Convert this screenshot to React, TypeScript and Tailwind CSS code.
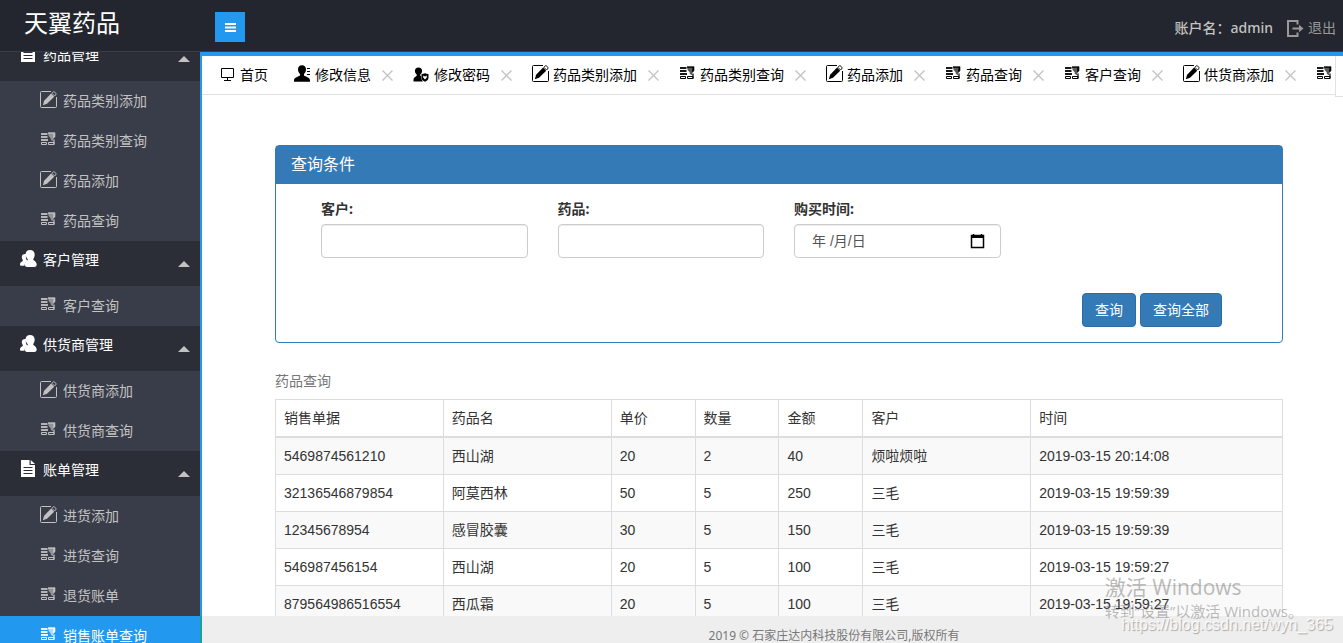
import type { ReactNode } from 'react';

type IconName = 'edit' | 'query' | 'users' | 'doc' | 'userInfo' | 'userShield' | 'monitor';

interface MenuGroup {
  title: string;
  icon: IconName;
  items: { label: string; icon: IconName; active?: boolean }[];
}

const menu: MenuGroup[] = [
  {
    title: '药品管理',
    icon: 'doc',
    items: [
      { label: '药品类别添加', icon: 'edit' },
      { label: '药品类别查询', icon: 'query' },
      { label: '药品添加', icon: 'edit' },
      { label: '药品查询', icon: 'query' },
    ],
  },
  {
    title: '客户管理',
    icon: 'users',
    items: [{ label: '客户查询', icon: 'query' }],
  },
  {
    title: '供货商管理',
    icon: 'users',
    items: [
      { label: '供货商添加', icon: 'edit' },
      { label: '供货商查询', icon: 'query' },
    ],
  },
  {
    title: '账单管理',
    icon: 'doc',
    items: [
      { label: '进货添加', icon: 'edit' },
      { label: '进货查询', icon: 'query' },
      { label: '退货账单', icon: 'query' },
      { label: '销售账单查询', icon: 'query', active: true },
    ],
  },
];

const tabs: { label: string; icon: IconName }[] = [
  { label: '修改信息', icon: 'userInfo' },
  { label: '修改密码', icon: 'userShield' },
  { label: '药品类别添加', icon: 'edit' },
  { label: '药品类别查询', icon: 'query' },
  { label: '药品添加', icon: 'edit' },
  { label: '药品查询', icon: 'query' },
  { label: '客户查询', icon: 'query' },
  { label: '供货商添加', icon: 'edit' },
  { label: '供货商查询', icon: 'query' },
];

const columns = [
  { title: '销售单据', width: 'w-2/12' },
  { title: '药品名', width: 'w-2/12' },
  { title: '单价', width: 'w-1/12' },
  { title: '数量', width: 'w-1/12' },
  { title: '金额', width: 'w-1/12' },
  { title: '客户', width: 'w-2/12' },
  { title: '时间', width: 'w-3/12' },
];

const rows = [
  ['5469874561210', '西山湖', '20', '2', '40', '烦啦烦啦', '2019-03-15 20:14:08'],
  ['32136546879854', '阿莫西林', '50', '5', '250', '三毛', '2019-03-15 19:59:39'],
  ['12345678954', '感冒胶囊', '30', '5', '150', '三毛', '2019-03-15 19:59:39'],
  ['546987456154', '西山湖', '20', '5', '100', '三毛', '2019-03-15 19:59:27'],
  ['879564986516554', '西瓜霜', '20', '5', '100', '三毛', '2019-03-15 19:59:27'],
];

const shapes: Record<IconName, ReactNode> = {
  edit: (
    <>
      <path d="M11 .5H1.500a1 1 0 0 0-1 1v14a1 1 0 0 0 1 1h14a1 1 0 0 0 1-1V6" fill="none" stroke="currentColor" />
      <path d="M2.800 14.200l1.300-4.400 7-7.200 3.100 3.100-7.200 7z" />
      <path d="M11.800 2.200l1-1a1.5 1.500 0 0 1 2.100 0l.7.7a1.500 1.500 0 0 1 0 2.100l-1 1z" fill="none" stroke="currentColor" strokeWidth=".9" />
    </>
  ),
  query: (
    <>
      <path d="M1 2h6.500v2H1zM1 5h6.500v2H1zM1 8h7v2H1z" opacity=".9" />
      <path d="M8 1.500h7.200v4.200l-2 2v2.600l-2.400-1.400V7.500L8.600 5z" opacity=".65" />
      <path d="M8 1.500h7.200v1.200H8zM13.500 2h1.700v3.700l-2 2v-2z" />
      <path d="M1.500 11.500h5v2h-5zM8.500 11.500h5.500v2H8.500z" fill="none" stroke="currentColor" />
      <path d="M13.400 8.500h1.200v5h-1.200z" />
    </>
  ),
  users: (
    <>
      <path d="M6.300 4.200C4 3.600 1.800 4.600 1.800 7c0 1.500.6 2.400 1.100 3.200C2.700 11.600 0 11.800 0 14.400c0 1 .6 1.400 1.500 1.400h3c.2-2.400 1.200-3.700 3-4.700C6.100 9.500 5.300 7 6.300 4.200z" />
      <path d="M10 0c2.900 0 4.700 1.800 4.700 4.500 0 2-.9 3.600-1.500 4.900.5 1.300 3.500 1.900 3.500 5.200 0 1.700-1 2.300-2.200 2.300H7c-1.400 0-2.200-.6-2.200-2.300 0-3.200 2.600-3.900 3.100-5.200-.8-1.300-2.400-2.800-2.400-4.900C5.500 1.800 7.200 0 10 0z" />
    </>
  ),
  doc: (
    <>
      <path fillRule="evenodd" d="M1 0h8.500v5H15v12H1zM3.500 7h9v1h-9zM3.500 10h9v1h-9zM3.500 13h9v1h-9z" />
      <path d="M10.700 0L15 4h-4.300z" />
    </>
  ),
  userInfo: (
    <>
      <path d="M8 .2c2.700 0 4 1.700 4 4.100 0 2-.8 3.600-2 4.700v1.600c1.600 1.200 5.600 1.600 6 4.600v1.500H0v-1.500c.4-3 4.400-3.400 6-4.600V9C4.800 7.900 4 6.300 4 4.300 4 1.900 5.300.2 8 .2z" />
      <path d="M13 3h3v1h-3zM13 6h3v1h-3zM13 9h3v1h-3z" />
    </>
  ),
  userShield: (
    <>
      <path d="M5.500 2.500c2.200 0 3.600 1.400 3.600 3.600 0 1.500-.7 2.700-1.800 3.500v1.200l.8.500c0 2.200.7 4 1.800 5.200H.5V14.500c.2-2.200 2.200-2.600 3.200-3.700V9.600C2.600 8.800 1.900 7.600 1.900 6.100c0-2.200 1.400-3.600 3.600-3.600z" />
      <path fillRule="evenodd" d="M8.500 9.200l3.500-1 3.500 1v3.500c0 2-1.600 3.300-3.500 4-1.900-.7-3.500-2-3.500-4zM10.200 10.600v2l1.800 1.800 1.800-1.800v-2L12 11.600z" />
    </>
  ),
  monitor: (
    <path d="M1.500 3.500h12v9h-12zM7.500 12.500v2.500M4 15.500h7" fill="none" stroke="currentColor" />
  ),
};

function Icon({ name, className = '' }: { name: IconName; className?: string }) {
  return (
    <svg viewBox="0 0 17 17" className={`h-[17px] w-[17px] shrink-0 ${className}`} fill="currentColor" aria-hidden="true">
      {shapes[name]}
    </svg>
  );
}

function Header() {
  return (
    <header className="flex h-[52px] shrink-0 items-start justify-between border-b border-[#393d49] bg-[#23262e] pr-[7px]">
      <div className="flex">
        <h1 className="w-[215px] pl-6 text-2xl leading-12 text-white">天翼药品</h1>
        <button type="button" aria-label="菜单" className="mt-3 flex h-[30px] w-[30px] items-center justify-center bg-[#2299ee] text-white">
          <svg viewBox="0 0 11 9" className="h-[9px] w-[11px]" fill="currentColor" aria-hidden="true">
            <path d="M0 0h11v2H0zM0 3.500h11v2H0zM0 7h11v2H0z" />
          </svg>
        </button>
      </div>
      <div className="flex items-center leading-14 text-[#c2c2c2]">
        <span className="font-['Noto_Sans','Noto_Sans_CJK_SC',sans-serif] font-medium">账户名：admin</span>
        <a href="#logout" className="ml-3.5 flex items-center gap-1 text-[#999]">
          <svg viewBox="0 0 17 17" className="h-[17px] w-[17px]" fill="none" stroke="currentColor" strokeWidth="2" aria-hidden="true">
            <path d="M10.500 4.500V1H1v15h9.500v-3.500" />
            <path d="M5.500 8.500H13" />
            <path d="M12 4.800l4.500 3.700L12 12.200z" fill="currentColor" stroke="none" />
          </svg>
          退出
        </a>
      </div>
    </header>
  );
}

function Sidebar() {
  return (
    <nav className="w-[200px] shrink-0 overflow-hidden bg-[#393d49]">
      {/* scrolled down a little, so the first group starts above the edge */}
      <div className="-mt-4">
        {menu.map((group) => (
          <section key={group.title}>
            <button type="button" className="flex h-[45px] w-full items-start bg-[#2b2e37] pr-2.5 pl-5 text-white">
              <Icon name={group.icon} className="mt-[9px]" />
              <span className="ml-1.5 leading-[38px]">{group.title}</span>
              <svg viewBox="0 0 12 6" className="mt-5 ml-auto h-1.5 w-3" fill="#c2c2c2" aria-hidden="true">
                <path d="M6 0l6 6H0z" />
              </svg>
            </button>
            <ul>
              {group.items.map((item) => (
                <li key={item.label}>
                  <a
                    href="#page"
                    className={`flex h-10 items-start gap-1.5 pl-10 leading-10 ${item.active ? 'bg-[#2299ee] text-white' : 'text-[#c2c2c2]'}`}
                  >
                    <Icon name={item.icon} className="mt-2.5" />
                    {item.label}
                  </a>
                </li>
              ))}
            </ul>
          </section>
        ))}
      </div>
    </nav>
  );
}

function TabBar() {
  return (
    <div className="flex items-start text-black">
      <ul className="flex h-[39px] min-w-0 flex-1 overflow-hidden border-b border-[#e2e2e2] pl-[18px] leading-[38px] whitespace-nowrap">
        <li className="mr-[26px] shrink-0">
          <a href="#home" className="flex items-start gap-[3px]">
            <Icon name="monitor" className="mt-[9px]" />
            首页
          </a>
        </li>
        {tabs.map((tab) => (
          <li key={tab.label} className="mr-5 flex shrink-0 items-center">
            <a href="#page" className="flex items-start gap-1">
              <Icon name={tab.icon} className="mt-[9px]" />
              {tab.label}
            </a>
            <button type="button" aria-label="关闭" className="ml-[11px] text-[#c2c2c2]">
              <svg viewBox="0 0 11 11" className="h-[11px] w-[11px]" fill="none" stroke="currentColor" strokeWidth="1.300" aria-hidden="true">
                <path d="M.5.5l10 10M10.500.5l-10 10" />
              </svg>
            </button>
          </li>
        ))}
      </ul>
      <div className="h-[41px] w-2 shrink-0 border-b border-l border-[#e2e2e2]" />
    </div>
  );
}

const inputClass =
  'block h-[34px] w-full rounded border border-[#ccc] bg-white px-3 text-[#555] shadow-[inset_0_1px_1px_rgba(0,0,0,0.075)]';
const labelClass = "mb-[5px] block font-['Noto_Sans','Noto_Sans_CJK_SC',sans-serif] font-bold";
const buttonClass = 'h-[34px] rounded border border-[#2e6da4] bg-[#337ab7] px-3 text-white';

function SearchPanel() {
  return (
    <section className="rounded border border-[#337ab7]">
      <h2 className="bg-[#337ab7] px-[15px] text-base leading-[38px] text-white">查询条件</h2>
      <form className="px-[45px] py-[15px]">
        <div className="grid grid-cols-4 gap-x-[30px]">
          <div>
            <label htmlFor="customer" className={labelClass}>客户:</label>
            <input id="customer" type="text" className={inputClass} />
          </div>
          <div>
            <label htmlFor="drug" className={labelClass}>药品:</label>
            <input id="drug" type="text" className={inputClass} />
          </div>
          <div>
            <label htmlFor="date" className={labelClass}>购买时间:</label>
            <div className="relative">
              <input id="date" type="text" placeholder="年 /月/日" className={`${inputClass} pl-[17px] placeholder:text-[#555]`} />
              <button type="button" aria-label="选择日期" className="absolute top-[9px] right-4 text-black">
                <svg viewBox="0 0 15 16" className="h-4 w-[15px]" fill="none" stroke="currentColor" aria-hidden="true">
                  <path d="M1.500 2.500h12v12h-12z" strokeWidth="1.500" />
                  <path d="M1 3.500h13" strokeWidth="3" />
                  <path d="M3.500 1v2M11.500 1v2" strokeWidth="1.500" />
                </svg>
              </button>
            </div>
          </div>
        </div>
        <div className="mt-[35px] flex justify-end gap-1 pr-[15px]">
          <button type="button" className={buttonClass}>查询</button>
          <button type="button" className={buttonClass}>查询全部</button>
        </div>
      </form>
    </section>
  );
}

function SalesTable() {
  return (
    <table className="w-full table-fixed border-collapse border border-[#ddd]">
      <caption className="pt-7 pb-2 text-left text-[#777]">药品查询</caption>
      <thead>
        <tr>
          {columns.map((col) => (
            <th key={col.title} className={`${col.width} border border-b-2 border-[#ddd] p-2 text-left font-normal`}>
              {col.title}
            </th>
          ))}
        </tr>
      </thead>
      <tbody>
        {rows.map((row) => (
          <tr key={row[0]} className="odd:bg-[#f9f9f9]">
            {row.map((cell, i) => (
              <td key={i} className="border border-[#ddd] p-2">{cell}</td>
            ))}
          </tr>
        ))}
      </tbody>
    </table>
  );
}

export default function App() {
  return (
    <div className="relative flex h-screen flex-col overflow-hidden bg-white font-['Liberation_Sans','Noto_Sans_CJK_SC',sans-serif] text-sm text-[#333]">
      <Header />
      <div className="flex min-h-0 flex-1">
        <Sidebar />
        <div className="flex min-w-0 flex-1 flex-col">
          <main className="min-h-0 flex-1 overflow-hidden border-t-4 border-l-2 border-[#2299ee]">
            <TabBar />
            <div className="pt-12 pr-[60px] pl-[73px] leading-5">
              <SearchPanel />
              <SalesTable />
            </div>
          </main>
          <footer className="h-[27px] shrink-0 overflow-hidden border-l-2 border-[#1aa094] bg-[#eee] pl-[123px] text-center font-['Noto_Sans','Noto_Sans_CJK_SC',sans-serif] text-xs leading-10 text-[#777]">
            2019 © 石家庄达内科技股份有限公司,版权所有
          </footer>
        </div>
      </div>

      {/* Watermarks */}
      <div className="pointer-events-none absolute right-10 bottom-5 font-['Open_Sans','Noto_Sans_CJK_SC',sans-serif] whitespace-nowrap text-[#777]/50">
        <p className="text-[21px] leading-6">激活 Windows</p>
        <p className="text-[15px] leading-6">转到“设置”以激活 Windows。</p>
      </div>
      <p className="pointer-events-none absolute right-2.5 bottom-2 text-base leading-5 text-white/80 [text-shadow:1px_1px_1px_rgba(0,0,0,0.3)]">
        https://blog.csdn.net/wyn_365
      </p>
    </div>
  );
}
